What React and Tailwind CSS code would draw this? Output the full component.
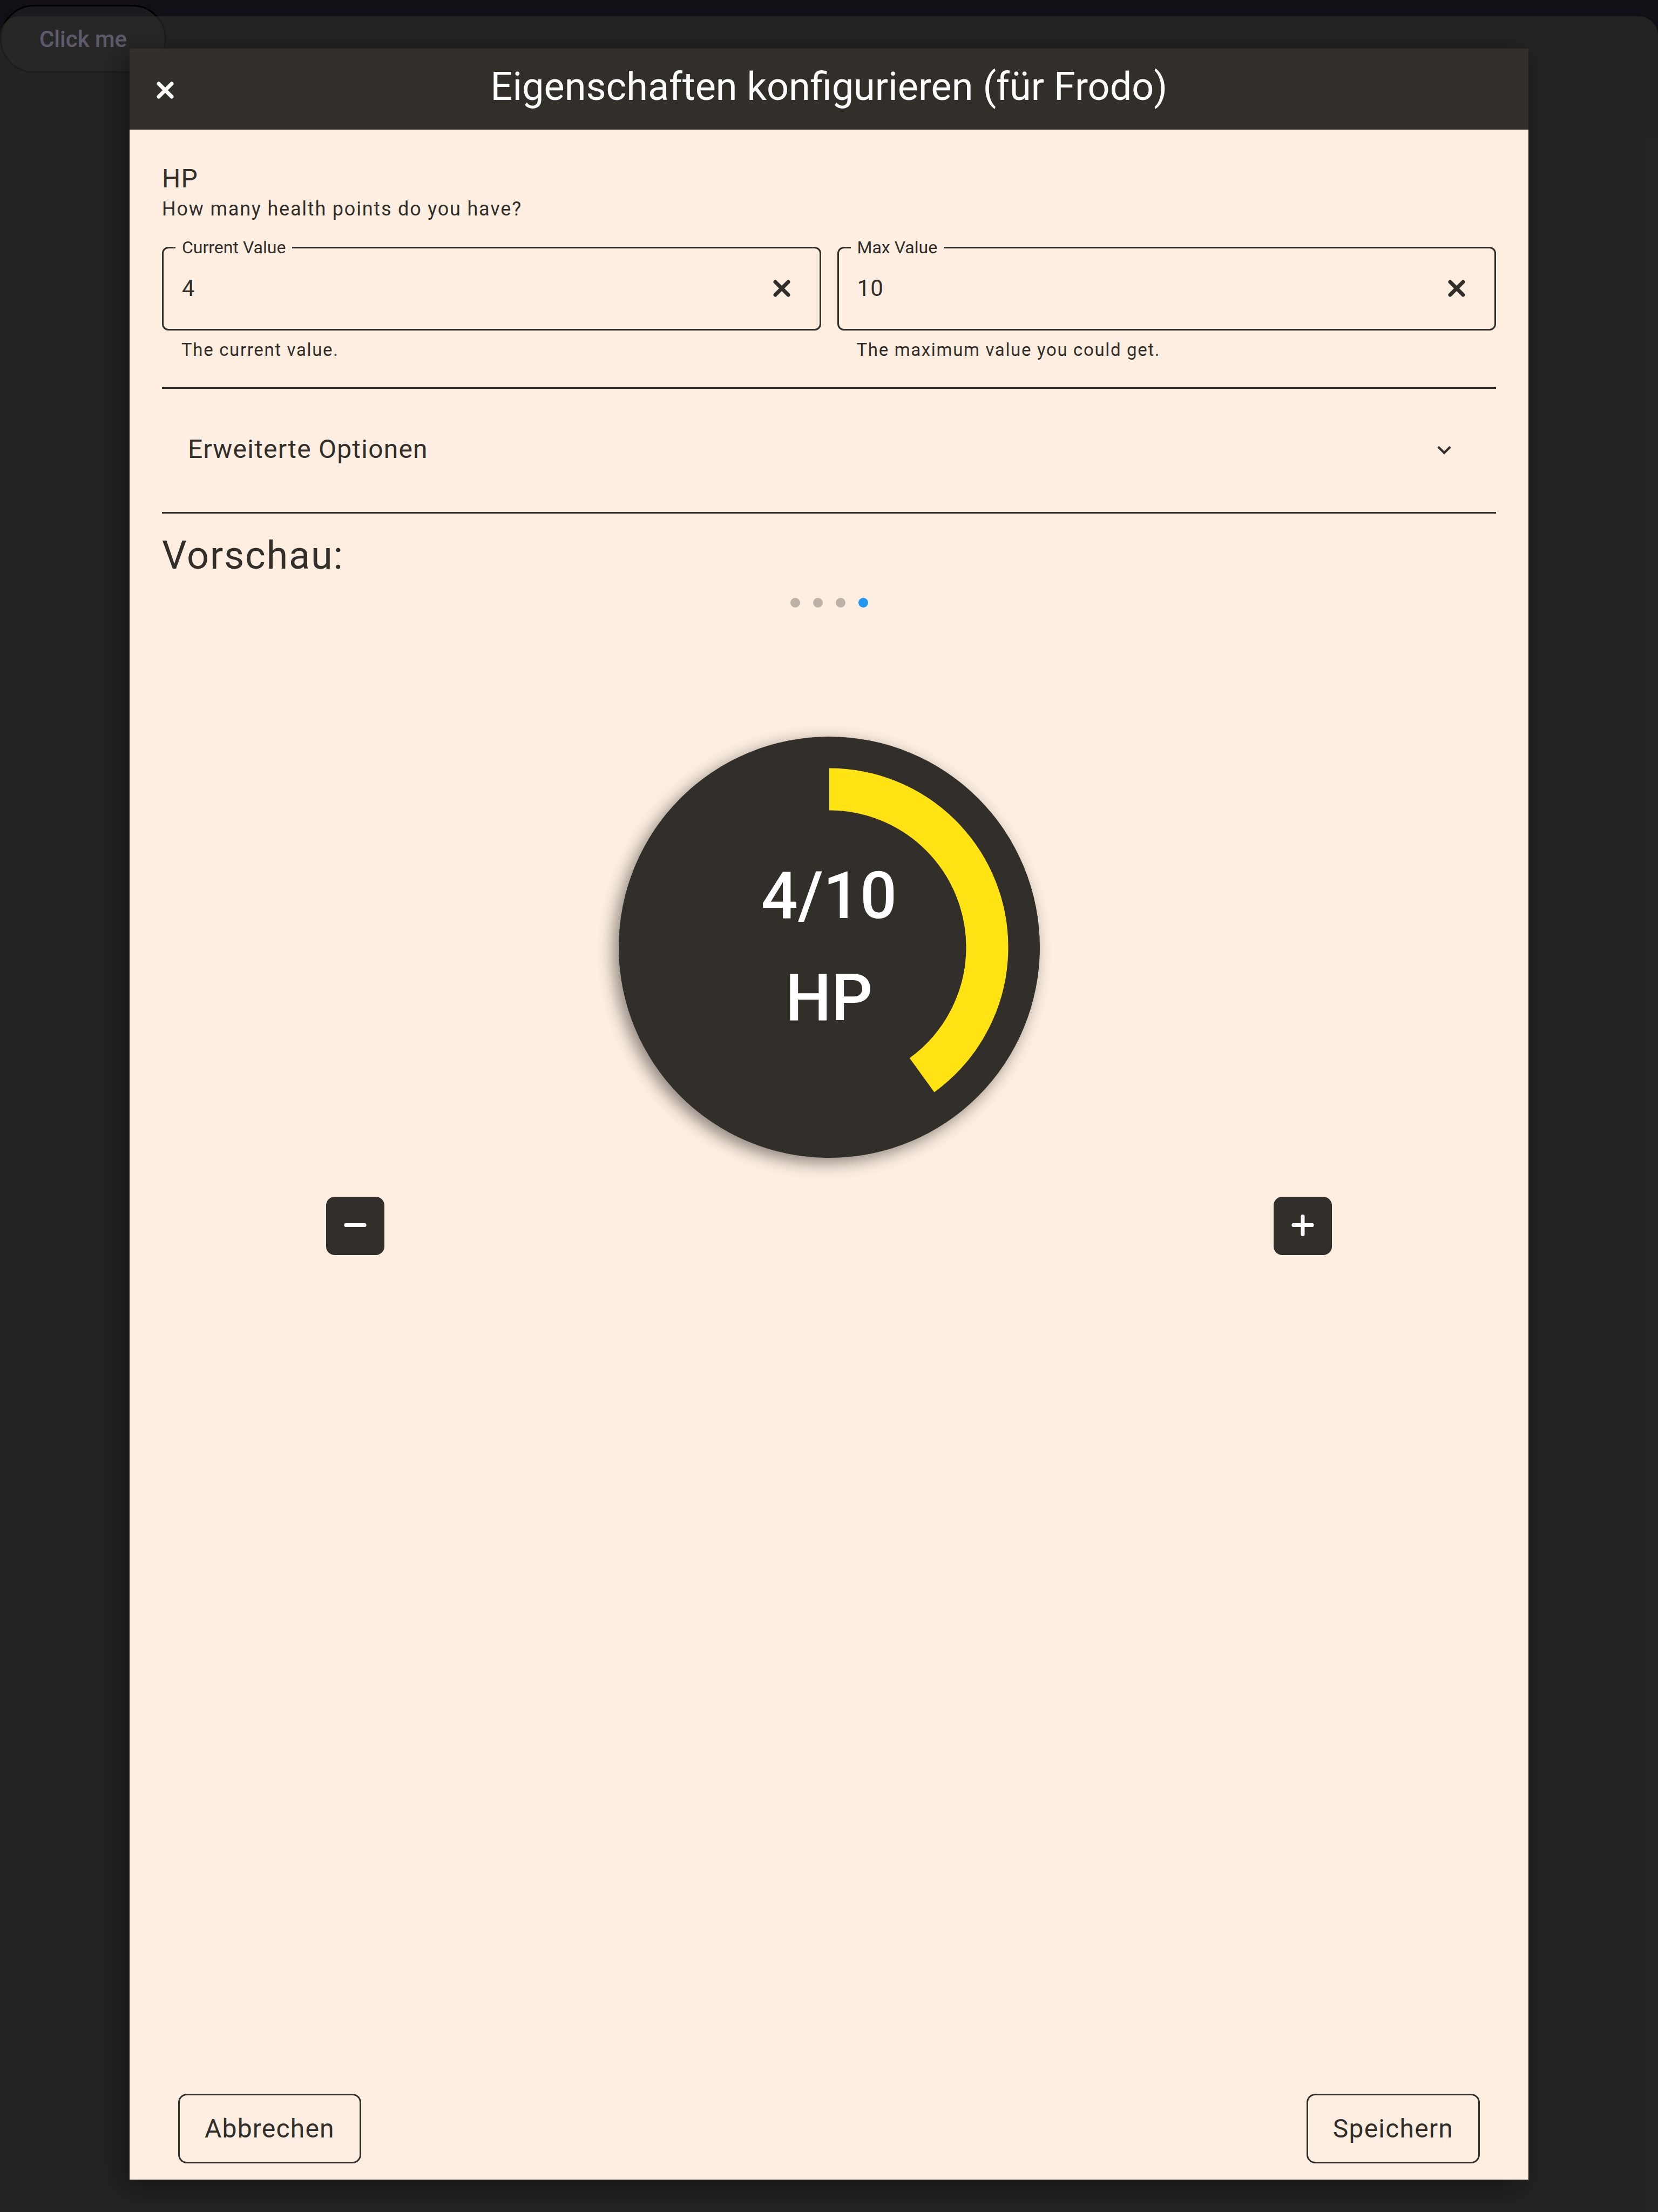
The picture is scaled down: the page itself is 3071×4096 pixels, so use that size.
import { useState } from "react";

function CrossIcon() {
  return (
    <svg viewBox="0 0 36 36" className="size-9" fill="none" stroke="currentColor" strokeWidth="7" strokeLinecap="round" aria-hidden="true">
      <path d="M6 6 30 30M30 6 6 30" />
    </svg>
  );
}

function ChevronIcon() {
  return (
    <svg viewBox="0 0 36 36" className="size-9" aria-hidden="true">
      <path
        d="M8.9 10.5 18 19.6 27.1 10.5a1 1 0 0 1 1.4 0l1.5 1.5a1 1 0 0 1 0 1.4L18 25.6 6 13.4a1 1 0 0 1 0-1.4l1.5-1.5a1 1 0 0 1 1.4 0Z"
        fill="currentColor"
      />
    </svg>
  );
}

function StepIcon({ plus }) {
  return (
    <svg viewBox="0 0 42 42" className="size-[42px]" fill="currentColor" aria-hidden="true">
      <rect x="0.5" y="16" width="41" height="7" rx="3" />
      {plus && <rect x="17.5" y="0" width="7" height="40" rx="3" />}
    </svg>
  );
}

function NumberField({ id, label, hint, value, onChange }) {
  return (
    <div className="min-w-0 flex-1">
      <fieldset className="flex min-w-0 items-center rounded-xl border-3 border-[#322e29] pb-[18px] pl-[22px] pr-[52px]">
        <legend className="px-3 text-[32px] leading-9">
          <label htmlFor={id}>{label}</label>
        </legend>
        <input
          id={id}
          type="text"
          inputMode="numeric"
          aria-describedby={id + "-hint"}
          className="h-[115px] min-w-0 flex-1 bg-transparent px-3 text-[42px] tracking-wide outline-none"
          value={value}
          onChange={(e) => onChange(e.target.value)}
        />
        <button type="button" aria-label={label + " löschen"} onClick={() => onChange("")}>
          <CrossIcon />
        </button>
      </fieldset>
      <p id={id + "-hint"} className="mt-3 pl-9 text-[33px] leading-12 tracking-wider">
        {hint}
      </p>
    </div>
  );
}

function Dial({ current, max }) {
  const share = Math.max(0, Math.min(1, Number(current) / Number(max) || 0));
  const length = 2 * Math.PI * 292.5;
  return (
    <div className="relative size-[780px] rounded-full bg-[#322e29] shadow-[-9px_9px_30px_rgba(0,0,0,0.45)]">
      <svg viewBox="0 0 780 780" className="size-full" aria-hidden="true">
        <circle
          cx="390"
          cy="390"
          r="292.5"
          fill="none"
          stroke="#ffe312"
          strokeWidth="78"
          strokeDasharray={`${share * length} ${length}`}
          transform="rotate(-90 390 390)"
        />
      </svg>
      <div className="absolute inset-0 flex flex-col items-center justify-center text-[120px] font-medium leading-[189px] text-white">
        <span>
          {current}/{max}
        </span>
        <span>HP</span>
      </div>
    </div>
  );
}

const PAGES = [0, 1, 2, 3];

export default function App() {
  const [current, setCurrent] = useState("4");
  const [max, setMax] = useState("10");
  const step = (by) => setCurrent(String(Number(current) + by));

  return (
    <div className="relative flex min-h-screen flex-col bg-[#121016] font-['Roboto',sans-serif] text-[#322e29]">
      <button
        type="button"
        className="absolute left-0 top-[9px] h-[126px] w-[308px] rounded-full border-3 border-black bg-[#1b1a1e] text-[42px] font-medium text-[#a598c8]"
      >
        Click me
      </button>

      <div className="relative mt-[30px] flex flex-1 flex-col rounded-t-[36px] bg-[#31302d]/60 px-[240px] py-[60px]">
        <section
          role="dialog"
          aria-labelledby="dialog-title"
          className="flex flex-1 flex-col bg-[#fdeee1] shadow-[-12px_12px_48px_rgba(0,0,0,0.4)]"
        >
          <header className="grid h-[150px] grid-cols-[132px_1fr_132px] items-center bg-[#322e29] text-white">
            <button type="button" aria-label="Schließen" className="flex h-full items-center justify-center pt-[3px]">
              <CrossIcon />
            </button>
            <h1 id="dialog-title" className="pb-2 text-center text-7xl">
              Eigenschaften konfigurieren (für Frodo)
            </h1>
          </header>

          <div className="flex flex-1 flex-col px-[60px] pb-[30px] pt-[60px]">
            <h2 className="text-5xl leading-[62px] tracking-wide">HP</h2>
            <p className="text-4xl leading-[50px] tracking-wider">How many health points do you have?</p>

            <div className="mt-7 flex gap-[30px]">
              <NumberField id="current" label="Current Value" hint="The current value." value={current} onChange={setCurrent} />
              <NumberField id="max" label="Max Value" hint="The maximum value you could get." value={max} onChange={setMax} />
            </div>

            <button
              type="button"
              aria-expanded="false"
              className="mt-[45px] flex h-[234px] items-center justify-between border-y-3 border-[#322e29] pl-12 pr-[78px] text-5xl tracking-wide"
            >
              <span className="pb-1">Erweiterte Optionen</span>
              <ChevronIcon />
            </button>

            <h2 className="mt-9 text-7xl leading-[84px] tracking-wide">Vorschau:</h2>

            <div className="mt-9 flex justify-center gap-6">
              {PAGES.map((page) => (
                <span key={page} className={page === 3 ? "size-[18px] rounded-full bg-[#2196f3]" : "size-[18px] rounded-full bg-[#bdb2a8]"} />
              ))}
            </div>

            <div className="mt-[239px] flex justify-center">
              <Dial current={current} max={max} />
            </div>

            <div className="mt-[72px] flex justify-between px-[304px]">
              <button
                type="button"
                aria-label="Verringern"
                onClick={() => step(-1)}
                className="flex size-[108px] items-center justify-center rounded-2xl bg-[#322e29] text-white"
              >
                <StepIcon />
              </button>
              <button
                type="button"
                aria-label="Erhöhen"
                onClick={() => step(1)}
                className="flex size-[108px] items-center justify-center rounded-2xl bg-[#322e29] text-white"
              >
                <StepIcon plus />
              </button>
            </div>

            <footer className="mt-auto flex justify-between px-[30px] text-5xl tracking-wide">
              <button type="button" className="h-[129px] rounded-2xl border-3 border-[#322e29] px-[46px]">
                Abbrechen
              </button>
              <button type="button" className="h-[129px] rounded-2xl border-3 border-[#322e29] px-[46px]">
                Speichern
              </button>
            </footer>
          </div>
        </section>
      </div>
    </div>
  );
}
